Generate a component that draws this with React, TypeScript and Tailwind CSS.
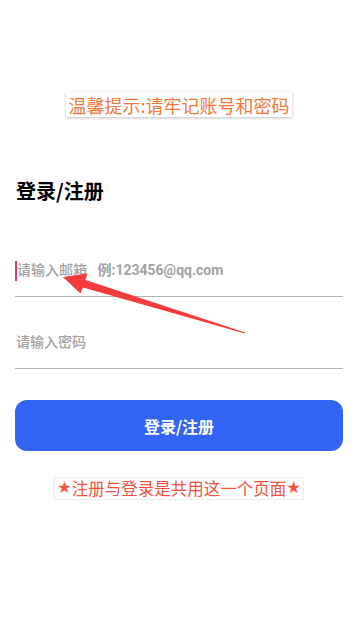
import React from "react";

export default function App() {
  const cjk = { fontFamily: '"Noto Sans CJK SC", "Noto Sans", sans-serif' };
  const mixed = { fontFamily: 'Roboto, "Noto Sans CJK SC", sans-serif' };
  const star = { fontFamily: '"DejaVu Sans", sans-serif' };
  return (
    <div className="relative w-[360px] min-h-[622px] bg-white overflow-hidden" style={cjk}>
      <div className="flex flex-col pl-[15px] pr-[17px]">
        <div className="mt-[92px] self-center">
          <div className="px-[2px] h-[25px] flex items-center text-[18px] leading-none text-[#f2773a] bg-white shadow-[0_1px_3px_rgba(0,0,0,0.25)]">
            温馨提示:请牢记账号和密码
          </div>
        </div>
        <div className="mt-[60px] text-[20px] leading-[28px] font-bold text-black pl-[1px]">
          登录/注册
        </div>
        <div className="mt-[40px] flex flex-col gap-[20px]">
          <div className="h-[52px] flex items-center border-b border-[#b3b3b3]">
            <div className="w-[2px] h-[20px] bg-[#e8336b]"></div>
            <span className="text-[14px] font-medium text-[#a2a2a2]" style={mixed}>
              请输入邮箱&nbsp;&nbsp;&nbsp;<span className="font-bold">例:123456@qq.com</span>
            </span>
          </div>
          <div className="h-[52px] flex items-center border-b border-[#b3b3b3]">
            <span className="ml-[1px] text-[14px] font-medium text-[#a2a2a2]" style={mixed}>请输入密码</span>
          </div>
        </div>
        <button className="mt-[31px] h-[51px] w-full rounded-[12px] bg-[#3264f5] text-white text-[16px] font-bold" style={cjk}>
          登录/注册
        </button>
        <div className="mt-[26px] self-center">
          <div className="h-[23px] px-[2px] flex items-center text-[16.5px] leading-none text-[#f2533f] border border-[#ececec] rounded-[2px]">
            <span style={star}>★</span>注册与登录是共用这一个页面<span style={star}>★</span>
          </div>
        </div>
      </div>
      <svg className="absolute left-0 top-0 pointer-events-none" width="360" height="622" viewBox="0 0 360 622">
        <polygon
          points="63,277 87.5,273.5 85.5,280 245.2,332.4 244.8,333.6 83,287.5 80.5,293.5"
          fill="#f53b3b"
        />
      </svg>
    </div>
  );
}
